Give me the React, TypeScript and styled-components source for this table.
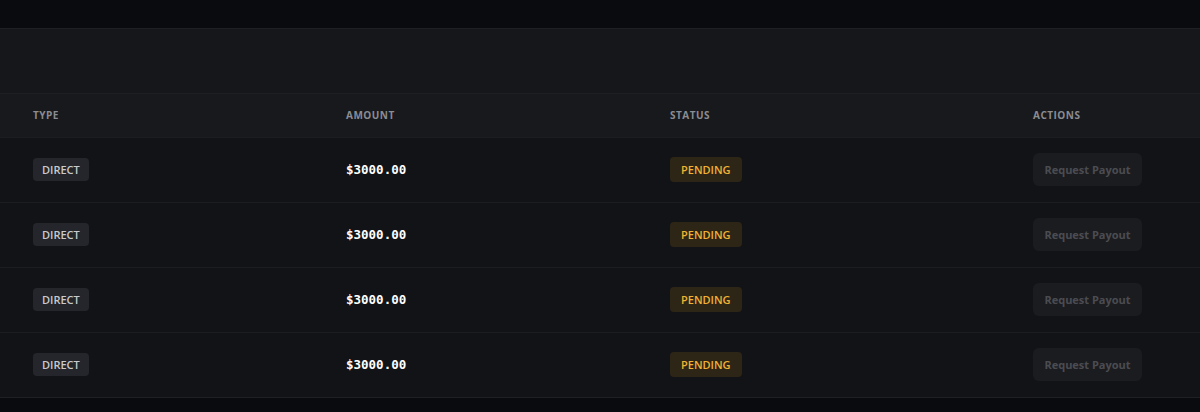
import React from "react";
import styled, { createGlobalStyle } from "styled-components";

const Global = createGlobalStyle`
  html, body { margin: 0; padding: 0; background: #0a0b0e; }
  body { font-family: "Open Sans", "Noto Sans", sans-serif; }
`;

const Page = styled.div`
  width: 1200px;
  height: 412px;
  background: #0a0b0e;
  padding-top: 28px;
  box-sizing: border-box;
  overflow: hidden;
`;

const Panel = styled.section`
  background: #16171b;
  border-top: 1px solid #1f2024;
  border-bottom: 1px solid #1f2024;
`;

const PanelHead = styled.div`
  height: 64px;
`;

const Table = styled.div`
  display: flex;
  flex-direction: column;
`;

const Row = styled.div<{ $head?: boolean }>`
  display: grid;
  grid-template-columns: 313px 324px 363px 1fr;
  align-items: center;
  box-sizing: border-box;
  padding-left: 33px;
  padding-bottom: 2px;
  height: ${(p) => (p.$head ? "44px" : "65px")};
  background: ${(p) => (p.$head ? "#18191d" : "#121317")};
  border-top: 1px solid ${(p) => (p.$head ? "#1e1f23" : "#1c1d21")};
`;

const HeadCell = styled.div`
  font-size: 10px;
  font-weight: 700;
  letter-spacing: 0.5px;
  text-transform: uppercase;
  color: #8b8c91;
`;

const Badge = styled.span<{ $tone: "neutral" | "warn" }>`
  display: inline-flex;
  align-items: center;
  justify-content: center;
  font-size: 11px;
  font-weight: 600;
  text-transform: uppercase;
  border-radius: 4px;
  padding: 0 ${(p) => (p.$tone === "warn" ? "11px" : "9px")};
  height: ${(p) => (p.$tone === "warn" ? "25px" : "23px")};
  background: ${(p) => (p.$tone === "warn" ? "#2d2516" : "#25262b")};
  color: ${(p) => (p.$tone === "warn" ? "#f2b233" : "#c9cacd")};
`;

const Amount = styled.span`
  font-family: "DejaVu Sans Mono", monospace;
  font-weight: 700;
  font-size: 12.5px;
  color: #ffffff;
`;

const Cell = styled.div`
  display: flex;
  align-items: center;
`;

const PayoutButton = styled.button`
  font-family: "Open Sans", "Noto Sans", sans-serif;
  font-size: 11px;
  font-weight: 700;
  color: #4b4c51;
  background: #1b1c20;
  border: none;
  border-radius: 6px;
  height: 33px;
  width: 109px;
  padding: 0;
  cursor: not-allowed;
`;

const rows = Array.from({ length: 4 }, () => ({
  type: "Direct",
  amount: "$3000.00",
  status: "Pending",
}));

export default function App() {
  return (
    <>
      <Global />
      <Page>
        <Panel>
          <PanelHead />
          <Table>
            <Row $head>
              <HeadCell>Type</HeadCell>
              <HeadCell>Amount</HeadCell>
              <HeadCell>Status</HeadCell>
              <HeadCell>Actions</HeadCell>
            </Row>
            {rows.map((r, i) => (
              <Row key={i}>
                <Cell>
                  <Badge $tone="neutral">{r.type}</Badge>
                </Cell>
                <Cell>
                  <Amount>{r.amount}</Amount>
                </Cell>
                <Cell>
                  <Badge $tone="warn">{r.status}</Badge>
                </Cell>
                <Cell>
                  <PayoutButton disabled>Request Payout</PayoutButton>
                </Cell>
              </Row>
            ))}
          </Table>
        </Panel>
      </Page>
    </>
  );
}
